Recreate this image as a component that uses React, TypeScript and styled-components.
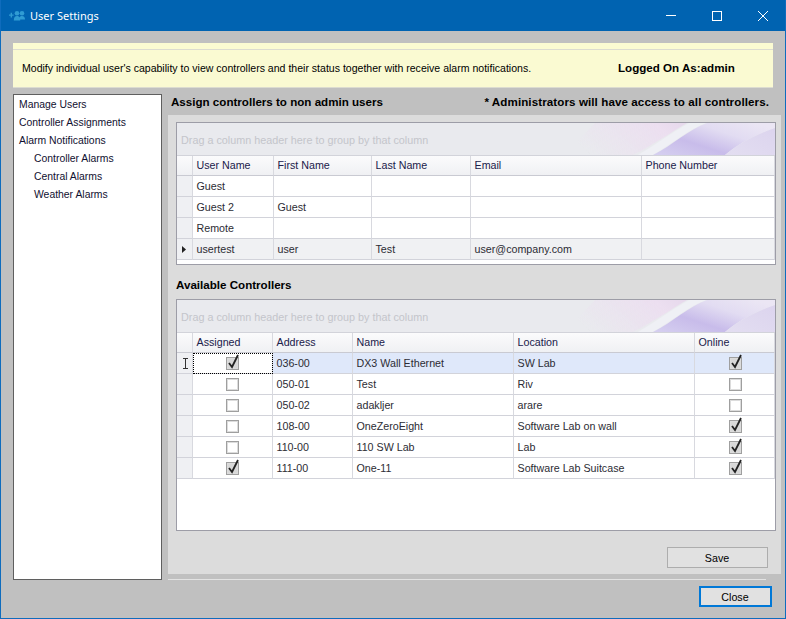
import React from "react";
import styled, { createGlobalStyle } from "styled-components";

const GlobalStyle = createGlobalStyle`
  html, body {
    margin: 0;
    padding: 0;
    background: #c0c0c0;
  }
  * {
    box-sizing: border-box;
  }
`;

const uiFont = `"Liberation Sans", Arial, sans-serif`;

const Window = styled.div`
  width: 786px;
  height: 619px;
  display: flex;
  flex-direction: column;
  background: #c0c0c0;
  border: 1px solid #0f6cbd;
  border-top: 0;
  font-family: ${uiFont};
  font-size: 11px;
  color: #000;
  overflow: hidden;
`;

const TitleBar = styled.div`
  height: 31px;
  flex: none;
  margin: 0 -1px;
  background: #0063b1;
  color: #fff;
  display: flex;
  align-items: center;
  padding-left: 9px;
`;

const TitleText = styled.span`
  margin-left: 5px;
  font-family: "Noto Sans", sans-serif;
  font-size: 11px;
`;

const WindowButtons = styled.div`
  margin-left: auto;
  display: flex;
`;

const WindowButton = styled.div`
  width: 46px;
  height: 31px;
  display: flex;
  align-items: center;
  justify-content: center;
  padding-right: 1px;
`;

const Content = styled.div`
  flex: 1;
  display: flex;
  flex-direction: column;
  padding: 12px 0 0 12px;
`;

const Notice = styled.div`
  width: 760px;
  height: 45px;
  flex: none;
  background: #fbfbd2;
  padding-top: 6px;
`;

const NoticeInner = styled.div`
  height: 39px;
  padding: 0 0 2px 9px;
  background: #fafad2;
  border-top: 1px solid #dcdcd0;
  border-bottom: 1px solid #dcdcd0;
  display: flex;
  align-items: center;
`;

const NoticeText = styled.span`
  width: 596px;
  font-size: 10.56px;
  white-space: nowrap;
`;

const LoggedOn = styled.span`
  font-weight: 700;
  font-size: 11.6px;
  white-space: nowrap;
`;

const Columns = styled.div`
  display: flex;
  margin-top: 6px;
  height: 486px;
`;

const Sidebar = styled.div`
  width: 149px;
  flex: none;
  background: #fff;
  border: 1px solid #5f5f5f;
  padding: 1px 5px 0;
`;

const NavItem = styled.div<{ $indent?: boolean }>`
  height: 18px;
  line-height: 18px;
  font-size: 10.4px;
  color: #101030;
  padding-left: ${(p) => (p.$indent ? "15px" : "0")};
  white-space: nowrap;
`;

const Main = styled.div`
  width: 613px;
  margin-left: 6px;
  display: flex;
  flex-direction: column;
`;

const MainHeading = styled.div`
  height: 21px;
  flex: none;
  display: flex;
  justify-content: space-between;
  align-items: center;
  padding: 0 12px 7px 3px;
  font-weight: 700;
  font-size: 11.6px;
  white-space: nowrap;
`;

const HeadingNote = styled.span`
  letter-spacing: 0.09px;
`;

const Panel = styled.div`
  height: 459px;
  flex: none;
  background: #dcdcdc;
  padding: 7px 5px 0 8px;
  display: flex;
  flex-direction: column;
`;

const Grid = styled.div<{ $height: number }>`
  width: 600px;
  height: ${(p) => p.$height}px;
  flex: none;
  background: #fff;
  border: 1px solid #9d9da7;
`;

const GroupArea = styled.div`
  position: relative;
  height: 32px;
  background: #e9eaee;
  color: #c4c5cb;
  font-size: 10.8px;
  line-height: 35px;
  padding-left: 4px;
  overflow: hidden;
`;

const GroupArt = styled.svg`
  position: absolute;
  right: 0;
  top: 0;
`;

const Row = styled.div<{ $columns: string; $bg?: string }>`
  display: grid;
  grid-template-columns: ${(p) => p.$columns};
  height: 21px;
  background: ${(p) => p.$bg ?? "#fff"};
`;

const HeaderRow = styled(Row)`
  background: linear-gradient(#fbfbfc, #eff0f3);
  border-top: 1px solid #d2d3da;
`;

const Cell = styled.div`
  border-right: 1px solid #d8d9df;
  border-bottom: 1px solid #d2d3da;
  padding-left: 3.5px;
  line-height: 20px;
  font-size: 10.7px;
  color: #2c2c34;
  white-space: nowrap;
  overflow: hidden;
`;

const HeaderCell = styled(Cell)`
  color: #20204a;
  line-height: 19px;
  border-bottom-color: #c9cad2;
`;

const Indicator = styled(Cell)`
  background: #eff0f3;
  display: flex;
  align-items: center;
  padding-left: 5px;
`;

const CheckCell = styled(Cell)<{ $focused?: boolean; $bg?: string }>`
  display: flex;
  align-items: center;
  justify-content: center;
  padding-left: 0;
  background: ${(p) => p.$bg ?? "#fff"};
  ${(p) => (p.$focused ? "outline: 1px dotted #000; outline-offset: -1px;" : "")}

  &:last-child {
    padding-left: 2px;
  }
`;

const Box = styled.span<{ $checked: boolean }>`
  position: relative;
  width: 13px;
  height: 13px;
  border: 1px solid #9f9f9f;
  box-shadow: inset 0 0 0 1px #dcdcdc;
  background: ${(p) => (p.$checked ? "#d8d8d8" : "#fff")};
`;

const Tick = styled.svg`
  position: absolute;
  left: 0;
  top: -4px;
`;

const SectionTitle = styled.div`
  height: 34px;
  flex: none;
  padding-top: 12px;
  font-weight: 700;
  font-size: 11.6px;
  line-height: 16px;
`;

const PanelFooter = styled.div`
  display: flex;
  justify-content: flex-end;
  padding: 16px 8px 0 0;
`;

const Button = styled.button<{ $default?: boolean; $width: number; $height: number }>`
  width: ${(p) => p.$width}px;
  height: ${(p) => p.$height}px;
  background: #e1e1e1;
  border: ${(p) => (p.$default ? "2px solid #0078d7" : "1px solid #adadad")};
  font-family: ${uiFont};
  font-size: 10.7px;
  color: #000;
  padding: 0 1px 0 0;
`;

const Divider = styled.div`
  width: 598px;
  height: 1px;
  flex: none;
  margin-top: 5px;
  background: #e3e3e3;
`;

const Footer = styled.div`
  display: flex;
  justify-content: flex-end;
  padding: 6px 13px 0 0;
`;

const userColumns = "16px 81px 98px 99px 171px 133px";
const controllerColumns = "16px 80px 80px 161px 181px 80px";

const users = [
  ["Guest", "", "", "", ""],
  ["Guest 2", "Guest", "", "", ""],
  ["Remote", "", "", "", ""],
  ["usertest", "user", "Test", "user@company.com", ""],
];

const controllers = [
  { assigned: true, address: "036-00", name: "DX3 Wall Ethernet", location: "SW Lab", online: true },
  { assigned: false, address: "050-01", name: "Test", location: "Riv", online: false },
  { assigned: false, address: "050-02", name: "adakljer", location: "arare", online: false },
  { assigned: false, address: "108-00", name: "OneZeroEight", location: "Software Lab on wall", online: true },
  { assigned: false, address: "110-00", name: "110 SW Lab", location: "Lab", online: true },
  { assigned: true, address: "111-00", name: "One-11", location: "Software Lab Suitcase", online: true },
];

function Check({ checked }: { checked: boolean }) {
  return (
    <Box $checked={checked}>
      {checked && (
        <Tick width="13" height="16" viewBox="0 0 13 16">
          <path d="M2 9 L5 13 L11 1" fill="none" stroke="#222" strokeWidth="1.8" />
        </Tick>
      )}
    </Box>
  );
}

function GroupPanel({ id }: { id: string }) {
  return (
    <GroupArea>
      Drag a column header here to group by that column
      <GroupArt width="300" height="32" viewBox="0 0 300 32">
        <defs>
          <linearGradient id={`${id}-pink`} x1="0" x2="1" y1="0.3" y2="0">
            <stop offset="0" stopColor="#ecdff0" stopOpacity="0" />
            <stop offset="0.75" stopColor="#ecdff0" />
            <stop offset="1" stopColor="#e6d8ec" />
          </linearGradient>
          <linearGradient id={`${id}-wing`} x1="0" x2="1" y1="1" y2="0.2">
            <stop offset="0" stopColor="#d6d0f0" />
            <stop offset="0.38" stopColor="#c8bcea" />
            <stop offset="0.7" stopColor="#e2dcf2" />
            <stop offset="1" stopColor="#ebe6f4" />
          </linearGradient>
          <linearGradient id={`${id}-low`} x1="0" x2="1" y1="1" y2="0">
            <stop offset="0" stopColor="#e3def1" />
            <stop offset="1" stopColor="#dcd4ee" />
          </linearGradient>
          <filter id={`${id}-soft`}>
            <feGaussianBlur stdDeviation="0.5" />
          </filter>
        </defs>
        <g filter={`url(#${id}-soft)`}>
          <path d="M90 32 L158 32 C178 22 195 10 212 0 L120 0 Z" fill={`url(#${id}-pink)`} />
          <path d="M163 32 C180 22 196 10 214 0 L232 0 C214 6 198 20 178 32 Z" fill="#eff0f5" />
          <path d="M178 32 C198 22 214 6 232 0 L300 0 L300 5 C280 12 265 20 250 32 Z" fill={`url(#${id}-wing)`} />
          <path d="M250 32 C265 20 280 12 300 5 L300 32 Z" fill={`url(#${id}-low)`} />
        </g>
      </GroupArt>
    </GroupArea>
  );
}

export default function App() {
  return (
    <>
      <GlobalStyle />
      <Window>
        <TitleBar>
          <svg width="16" height="10" viewBox="0 0 16 10" fill="#2f9bd3">
            <circle cx="8" cy="2.3" r="2.3" />
            <circle cx="13" cy="2.3" r="2.3" />
            <path d="M4.8 9.5 C4.8 6.2 6 5 8 5 C9.4 5 10.4 5.6 10.5 6.5 C11 5.4 12 5 13 5 C15 5 16 6.2 16 8.6 L11.2 8.6 L11.2 9.5 Z" />
            <path d="M0 3.4 H1.6 V1.8 H3 V3.4 H4.6 V4.8 H3 V6.4 H1.6 V4.8 H0 Z" />
          </svg>
          <TitleText>User Settings</TitleText>
          <WindowButtons>
            <WindowButton>
              <svg width="10" height="10" viewBox="0 0 10 10">
                <path d="M0 4.5 H10" stroke="#fff" />
              </svg>
            </WindowButton>
            <WindowButton>
              <svg width="10" height="10" viewBox="0 0 10 10">
                <rect x="0.5" y="0.5" width="9" height="9" fill="none" stroke="#fff" />
              </svg>
            </WindowButton>
            <WindowButton>
              <svg width="10" height="10" viewBox="0 0 10 10">
                <path d="M0 0 L10 10 M10 0 L0 10" stroke="#fff" />
              </svg>
            </WindowButton>
          </WindowButtons>
        </TitleBar>
        <Content>
          <Notice>
            <NoticeInner>
              <NoticeText>
                Modify individual user's capability to view controllers and their status together with receive alarm notifications.
              </NoticeText>
              <LoggedOn>Logged On As:admin</LoggedOn>
            </NoticeInner>
          </Notice>
          <Columns>
            <Sidebar>
              <NavItem>Manage Users</NavItem>
              <NavItem>Controller Assignments</NavItem>
              <NavItem>Alarm Notifications</NavItem>
              <NavItem $indent>Controller Alarms</NavItem>
              <NavItem $indent>Central Alarms</NavItem>
              <NavItem $indent>Weather Alarms</NavItem>
            </Sidebar>
            <Main>
              <MainHeading>
                <span>Assign controllers to non admin users</span>
                <HeadingNote>* Administrators will have access to all controllers.</HeadingNote>
              </MainHeading>
              <Panel>
                <Grid $height={143}>
                  <GroupPanel id="users" />
                  <HeaderRow $columns={userColumns}>
                    <HeaderCell />
                    {["User Name", "First Name", "Last Name", "Email", "Phone Number"].map((h) => (
                      <HeaderCell key={h}>{h}</HeaderCell>
                    ))}
                  </HeaderRow>
                  {users.map((u, i) => {
                    const current = i === users.length - 1;
                    return (
                      <Row key={u[0]} $columns={userColumns} $bg={current ? "#f0f1f3" : undefined}>
                        <Indicator>
                          {current && (
                            <svg width="4" height="7" viewBox="0 0 4 7">
                              <path d="M0 0 L4 3.5 L0 7 Z" fill="#222" />
                            </svg>
                          )}
                        </Indicator>
                        {u.map((value, c) => (
                          <Cell key={c}>{value}</Cell>
                        ))}
                      </Row>
                    );
                  })}
                </Grid>
                <SectionTitle>Available Controllers</SectionTitle>
                <Grid $height={232}>
                  <GroupPanel id="controllers" />
                  <HeaderRow $columns={controllerColumns}>
                    <HeaderCell />
                    {["Assigned", "Address", "Name", "Location", "Online"].map((h) => (
                      <HeaderCell key={h}>{h}</HeaderCell>
                    ))}
                  </HeaderRow>
                  {controllers.map((c, i) => (
                    <Row key={c.address} $columns={controllerColumns} $bg={i === 0 ? "#dfe8fa" : undefined}>
                      <Indicator>
                        {i === 0 && (
                          <svg width="7" height="11" viewBox="0 0 7 11">
                            <path d="M1 0.5 H6 M1 10.5 H6 M3.5 0.5 V10.5" stroke="#333" fill="none" />
                          </svg>
                        )}
                      </Indicator>
                      <CheckCell $focused={i === 0}>
                        <Check checked={c.assigned} />
                      </CheckCell>
                      <Cell>{c.address}</Cell>
                      <Cell>{c.name}</Cell>
                      <Cell>{c.location}</Cell>
                      <CheckCell $bg={i === 0 ? "#dfe8fa" : undefined}>
                        <Check checked={c.online} />
                      </CheckCell>
                    </Row>
                  ))}
                </Grid>
                <PanelFooter>
                  <Button $width={101} $height={21}>Save</Button>
                </PanelFooter>
              </Panel>
              <Divider />
            </Main>
          </Columns>
          <Footer>
            <Button $default $width={73} $height={21}>Close</Button>
          </Footer>
        </Content>
      </Window>
    </>
  );
}
